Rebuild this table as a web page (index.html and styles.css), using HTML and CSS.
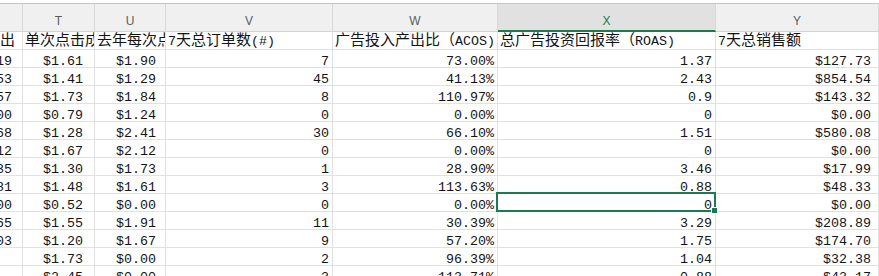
FILE: index.html
```html
<!DOCTYPE html>
<html lang="zh-CN">
<head>
<meta charset="utf-8">
<title>Sheet</title>
<link rel="stylesheet" href="styles.css">
</head>
<body>
<div class="sheet">
  <div class="cols">
    <div class="col"></div>
    <div class="col">T</div>
    <div class="col">U</div>
    <div class="col">V</div>
    <div class="col">W</div>
    <div class="col on">X</div>
    <div class="col">Y</div>
  </div>
  <div class="grid">
    <div class="c h s">广告产出</div>
    <div class="c h">单次点击成本</div>
    <div class="c h">去年每次点击成本</div>
    <div class="c h"><span class="m">7</span>天总订单数<span class="m">(#)</span></div>
    <div class="c h">广告投入产出比（<span class="m">ACOS)</span></div>
    <div class="c h">总广告投资回报率（<span class="m">ROAS)</span></div>
    <div class="c h"><span class="m">7</span>天总销售额</div>

    <div class="c s">$4.19</div><div class="c t">$1.61</div><div class="c u">$1.90</div><div class="c r">7</div><div class="c r">73.00%</div><div class="c r">1.37</div><div class="c y">$127.73</div>
    <div class="c s">$6.53</div><div class="c t">$1.41</div><div class="c u">$1.29</div><div class="c r">45</div><div class="c r">41.13%</div><div class="c r">2.43</div><div class="c y">$854.54</div>
    <div class="c s">$5.57</div><div class="c t">$1.73</div><div class="c u">$1.84</div><div class="c r">8</div><div class="c r">110.97%</div><div class="c r">0.9</div><div class="c y">$143.32</div>
    <div class="c s">$0.00</div><div class="c t">$0.79</div><div class="c u">$1.24</div><div class="c r">0</div><div class="c r">0.00%</div><div class="c r">0</div><div class="c y">$0.00</div>
    <div class="c s">$5.68</div><div class="c t">$1.28</div><div class="c u">$2.41</div><div class="c r">30</div><div class="c r">66.10%</div><div class="c r">1.51</div><div class="c y">$580.08</div>
    <div class="c s">$1.12</div><div class="c t">$1.67</div><div class="c u">$2.12</div><div class="c r">0</div><div class="c r">0.00%</div><div class="c r">0</div><div class="c y">$0.00</div>
    <div class="c s">$1.35</div><div class="c t">$1.30</div><div class="c u">$1.73</div><div class="c r">1</div><div class="c r">28.90%</div><div class="c r">3.46</div><div class="c y">$17.99</div>
    <div class="c s">$2.81</div><div class="c t">$1.48</div><div class="c u">$1.61</div><div class="c r">3</div><div class="c r">113.63%</div><div class="c r">0.88</div><div class="c y">$48.33</div>
    <div class="c s">$0.00</div><div class="c t">$0.52</div><div class="c u">$0.00</div><div class="c r">0</div><div class="c r">0.00%</div><div class="c r sel">0<span class="frame"><span class="handle"></span></span></div><div class="c y">$0.00</div>
    <div class="c s">$6.65</div><div class="c t">$1.55</div><div class="c u">$1.91</div><div class="c r">11</div><div class="c r">30.39%</div><div class="c r">3.29</div><div class="c y">$208.89</div>
    <div class="c s">$2.03</div><div class="c t">$1.20</div><div class="c u">$1.67</div><div class="c r">9</div><div class="c r">57.20%</div><div class="c r">1.75</div><div class="c y">$174.70</div>
    <div class="c s"></div><div class="c t">$1.73</div><div class="c u">$0.00</div><div class="c r">2</div><div class="c r">96.39%</div><div class="c r">1.04</div><div class="c y">$32.38</div>
    <div class="c s"></div><div class="c t">$2.45</div><div class="c u">$0.00</div><div class="c r">3</div><div class="c r">113.71%</div><div class="c r">0.88</div><div class="c y">$43.17</div>
  </div>
</div>
</body>
</html>
```

FILE: styles.css
```css
html, body {
  margin: 0;
  padding: 0;
  background: #ffffff;
  overflow: hidden;
}

.sheet {
  width: 879px;
  height: 276px;
  overflow: hidden;
  padding-top: 3px;
  box-sizing: border-box;
  background: #ffffff;
}

.cols,
.grid {
  display: grid;
  grid-template-columns: 23px 72px 71px 167px 165px 218px 163px;
}

.cols {
  border-top: 1px solid #c6c6c6;
  background: #f0f0f0;
}

.col {
  height: 28px;
  box-sizing: border-box;
  border-right: 1px solid #d9d9d9;
  border-bottom: 1px solid #d4d4d4;
  padding-top: 6px;
  font: 12px/22px "Liberation Sans", Arial, sans-serif;
  color: #5c5c5c;
  text-align: center;
  overflow: hidden;
}

.col.on {
  background: #e1e1e1;
  color: #1b7a50;
  border-bottom: 2px solid #1b7a50;
}

.c {
  position: relative;
  height: 18px;
  box-sizing: border-box;
  border-right: 1px solid #e1e1e1;
  border-bottom: 1px solid #e1e1e1;
  padding-top: 3px;
  font: 13.33px/17px "Liberation Mono", "Courier New", monospace;
  color: #141414;
  white-space: nowrap;
  overflow: hidden;
}

.h {
  padding: 0 0 0 2px;
  font: 15px/14px "Noto Sans CJK SC", "Noto Sans", sans-serif;
}

.m {
  font: 13.33px "Liberation Mono", "Courier New", monospace;
}

.s {
  display: flex;
  justify-content: flex-end;
  padding-right: 10px;
}

.h.s {
  padding-right: 7px;
}

.t {
  text-align: right;
  padding-right: 11px;
}

.u {
  text-align: right;
  padding-right: 9px;
}

.r {
  text-align: right;
  padding-right: 3px;
}

.y {
  text-align: right;
  padding-right: 7px;
}

.sel {
  overflow: visible;
  z-index: 2;
}

.frame {
  position: absolute;
  top: -2px;
  left: -2px;
  right: -1px;
  bottom: -1px;
  border: 2px solid #1b7a50;
}

.handle {
  position: absolute;
  right: -3px;
  bottom: -3px;
  width: 5px;
  height: 5px;
  background: #1b7a50;
  box-shadow: 0 0 0 1px #ffffff;
}
```
